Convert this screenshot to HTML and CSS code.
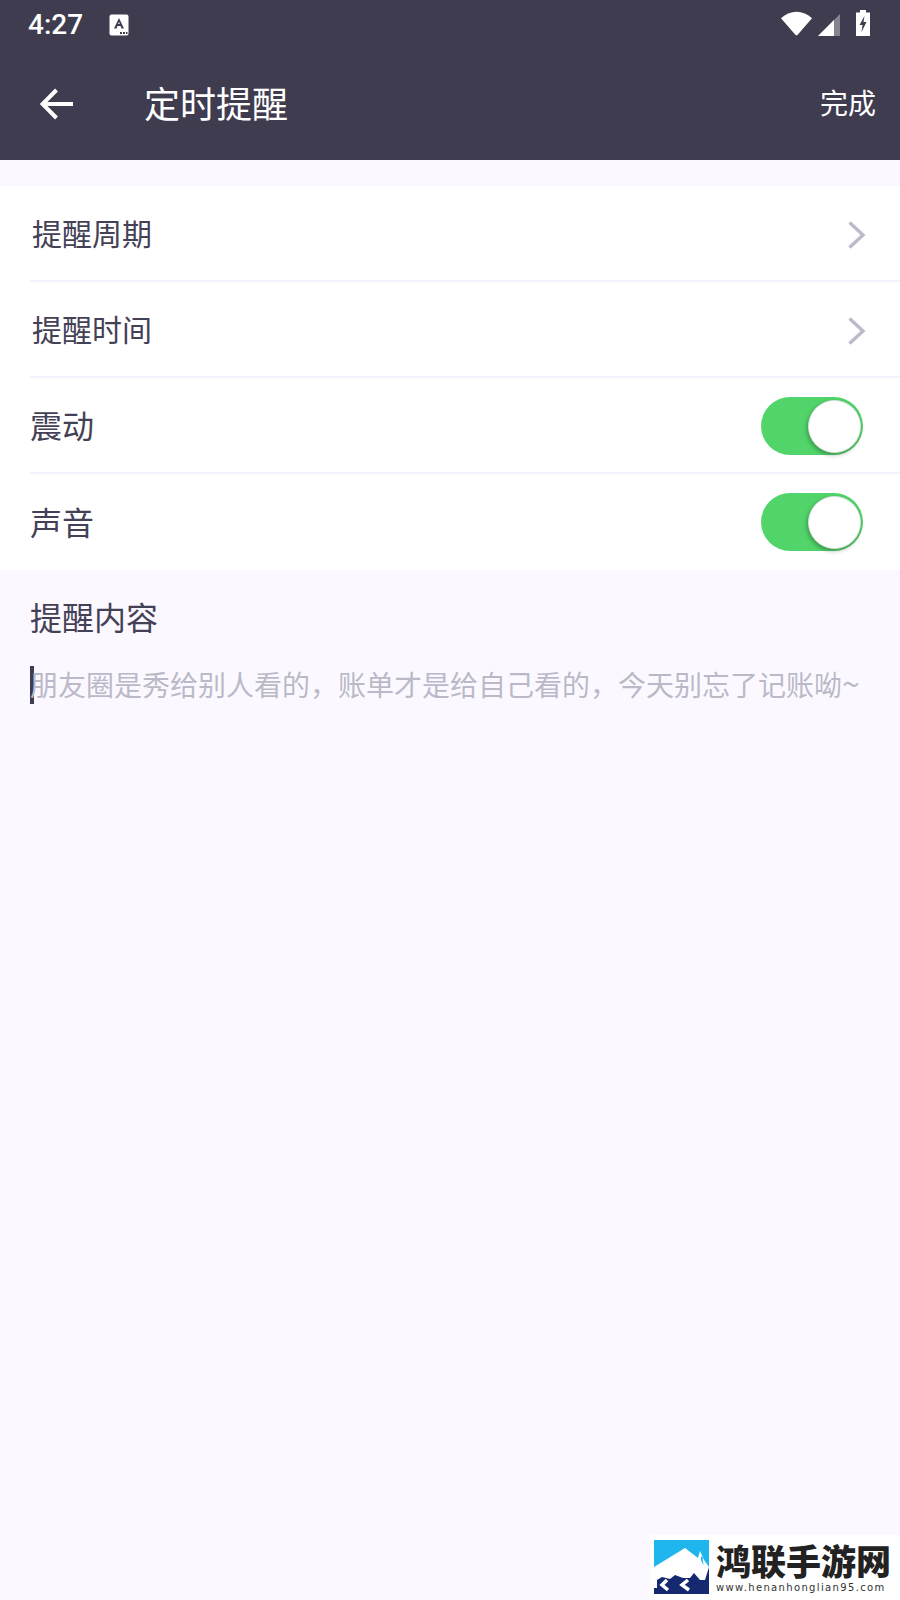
FILE: index.html
```html
<!DOCTYPE html>
<html lang="zh">
<head>
    <meta charset="UTF-8">
    <meta name="viewport" content="width=device-width, initial-scale=1.0">
    <title>定时提醒</title>
    <link rel="stylesheet" href="styles.css">
</head>
<body>
    <div class="screen">
        <!-- 顶部栏 -->
        <header class="app-header">
            <div class="status-bar">
                <span class="status-time">4:27</span>
                <svg class="status-a" width="20" height="22" viewBox="0 0 20 22">
                    <rect x="0.5" y="0.5" width="19" height="21" rx="2" fill="#fff"/>
                    <path d="M5 14.500 L10 4 L15 14.500 H12.500 L11.500 12 H8.500 L7.500 14.500 Z M9.200 10 H10.800 L10 7.800 Z" fill="#3f3c50" fill-rule="evenodd"/>
                    <path d="M11 18h2v2h-2zM14 18h2v2h-2zM17 18h1.500v2H17z" fill="#3f3c50"/>
                </svg>
                <div class="status-right">
                    <svg width="31" height="25" viewBox="0 0 32 25">
                        <path d="M0 7 C9 -2 23 -2 32 7 L17.200 24 Q16 25.200 14.800 24 Z" fill="#fff"/>
                    </svg>
                    <svg width="22" height="22" viewBox="0 0 22 22">
                        <path d="M0 22 L22 0 V22 Z" fill="#85838f"/>
                        <path d="M0 22 L16 6 V22 Z" fill="#fff"/>
                    </svg>
                    <svg class="status-battery" width="14" height="26" viewBox="0 0 14 26">
                        <path d="M4 0 H10 V2.500 H14 V26 H0 V2.500 H4 Z" fill="#fff"/>
                        <path d="M8.500 6 L3.500 15 H6.500 L5.500 22 L10.500 12 H7.500 Z" fill="#3f3c50"/>
                    </svg>
                </div>
            </div>
            <div class="title-bar">
                <svg class="back-icon" width="34" height="32" viewBox="0 0 34 32">
                    <path d="M33 16 H3 M16.500 2 L2.500 16 L16.500 30" fill="none" stroke="#fff" stroke-width="4"/>
                </svg>
                <h1 class="page-title">定时提醒</h1>
                <span class="done-btn">完成</span>
            </div>
        </header>

        <!-- 设置列表 -->
        <div class="setting-list">
            <div class="setting-row row-link">
                <span class="setting-label">提醒周期</span>
                <svg class="chevron" width="20" height="30" viewBox="0 0 20 30">
                    <path d="M2.500 2.500 L16 15 L2.500 27.500" fill="none" stroke="#bdbbca" stroke-width="3.500"/>
                </svg>
            </div>
            <div class="setting-row row-link">
                <span class="setting-label">提醒时间</span>
                <svg class="chevron" width="20" height="30" viewBox="0 0 20 30">
                    <path d="M2.500 2.500 L16 15 L2.500 27.500" fill="none" stroke="#bdbbca" stroke-width="3.500"/>
                </svg>
            </div>
            <div class="setting-row row-switch">
                <span class="setting-label">震动</span>
                <div class="switch"><div class="switch-knob"></div></div>
            </div>
            <div class="setting-row row-switch">
                <span class="setting-label">声音</span>
                <div class="switch"><div class="switch-knob"></div></div>
            </div>
        </div>

        <!-- 提醒内容 -->
        <section class="content-box">
            <h2 class="content-title">提醒内容</h2>
            <div class="content-input">
                <span class="caret"></span>
                <span class="placeholder">朋友圈是秀给别人看的，账单才是给自己看的，今天别忘了记账呦<span class="tilde">~</span></span>
            </div>
        </section>

        <!-- 水印 -->
        <div class="watermark">
            <svg class="watermark-logo" width="55" height="54" viewBox="0 0 55 54">
                <rect width="55" height="54" fill="#1fb6ee"/>
                <rect y="28" width="55" height="26" fill="#14296f"/>
                <path d="M0 27 L31 8 L44 18 L46 11 L50 20 L55 27 L51 40 L46 40 L40 33 L36 38 L29 38 L21 35 L16 39 L8 37 L3 40 V48 H0 Z" fill="#fff"/>
                <path d="M47 16 Q46 21 50 25 Q48 20 49 18 Z" fill="#1fb6ee"/>
                <path d="M13 40 L8 45 L14 50 M34 40 L28 45 L35 50" fill="none" stroke="#fff" stroke-width="3.500"/>
            </svg>
            <div class="watermark-text">
                <div class="watermark-name">鸿联手游网</div>
                <div class="watermark-url">www.henanhonglian95.com</div>
            </div>
        </div>
    </div>
</body>
</html>
```

FILE: styles.css
```css
* {
    box-sizing: border-box;
}

body {
    margin: 0;
    font-family: "Noto Sans CJK SC", Roboto, sans-serif;
    background: #fbf9ff;
    color: #3f3c50;
}

.screen {
    position: relative;
    height: 1600px;
    overflow: hidden;
}

.app-header {
    height: 160px;
    background: #3f3c50;
    color: white;
}

.status-bar {
    height: 48px;
    padding: 1px 30px 0 28px;
    display: flex;
    align-items: center;
}

.status-time {
    font-family: Roboto, sans-serif;
    font-size: 28px;
    font-weight: 500;
}

.status-a {
    margin-left: 26px;
}

.status-right {
    margin-left: auto;
    margin-bottom: 3px;
    display: flex;
    align-items: flex-end;
    gap: 6px;
}

.status-battery {
    margin-left: 10px;
}

.title-bar {
    height: 112px;
    padding: 0 24px 0 40px;
    display: flex;
    align-items: center;
}

.page-title {
    margin: 0 0 0 70px;
    padding-bottom: 5px;
    font-size: 36px;
    font-weight: 400;
    flex: 1;
}

.done-btn {
    padding-bottom: 4px;
    font-size: 28px;
}

.setting-list {
    margin-top: 26px;
    background: white;
}

.setting-row {
    height: 96px;
    margin-left: 30px;
    padding-right: 37px;
    border-bottom: 2px solid #f3f1fc;
    display: flex;
    align-items: center;
    justify-content: space-between;
    font-size: 30px;
}

.setting-row:last-child {
    border-bottom: none;
}

.setting-label {
    margin-bottom: 3px;
    color: #444156;
}

.row-link {
    padding-left: 2px;
    padding-right: 33px;
}

.row-switch {
    font-size: 32px;
}

.row-switch:nth-child(3) {
    padding-top: 2px;
}

.row-switch:nth-child(3) .setting-label {
    margin-bottom: 5px;
}

.chevron {
    margin-top: 3px;
}

.switch {
    position: relative;
    width: 102px;
    height: 58px;
    border-radius: 29px;
    background: #51d469;
}

.switch-knob {
    position: absolute;
    top: 3px;
    right: 2px;
    width: 53px;
    height: 53px;
    border-radius: 50%;
    background: white;
    border: 1px solid #dfe3df;
    box-shadow: -1px 2px 4px rgba(0, 0, 0, 0.3);
}

.content-box {
    padding: 26px 30px 0;
}

.content-title {
    margin: 0;
    font-size: 32px;
    font-weight: 400;
    line-height: 40px;
    color: #444156;
}

.content-input {
    margin-top: 30px;
    display: flex;
    align-items: center;
    height: 38px;
}

.caret {
    width: 4px;
    height: 38px;
    background: #3f3c50;
    flex: none;
}

.placeholder {
    margin-left: -4px;
    padding-bottom: 2px;
    font-size: 28px;
    color: #bbb9c8;
    white-space: nowrap;
}

.tilde {
    font-size: 32px;
    line-height: 1;
}

.watermark {
    position: absolute;
    right: 0;
    bottom: 0;
    width: 250px;
    height: 65px;
    background: white;
    padding: 5px 0 0 4px;
    display: flex;
    gap: 7px;
}

.watermark-name {
    font-size: 35px;
    font-weight: 900;
    line-height: 40px;
    color: #222;
}

.watermark-url {
    margin-top: 1px;
    font-family: "DejaVu Sans", sans-serif;
    font-size: 10px;
    color: #333;
    letter-spacing: 1.350px;
    line-height: 14px;
    white-space: nowrap;
}
```
